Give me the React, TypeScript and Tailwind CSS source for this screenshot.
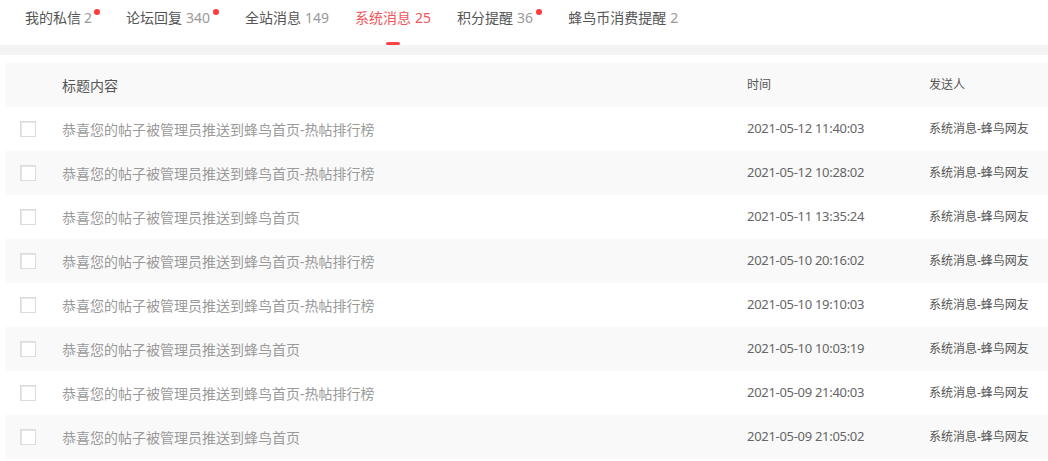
const tabs = [
  { label: '我的私信', count: 2, dot: true },
  { label: '论坛回复', count: 340, dot: true },
  { label: '全站消息', count: 149, dot: false },
  { label: '系统消息', count: 25, dot: false, active: true },
  { label: '积分提醒', count: 36, dot: true },
  { label: '蜂鸟币消费提醒', count: 2, dot: false },
];

const HOT = '恭喜您的帖子被管理员推送到蜂鸟首页-热帖排行榜';
const HOME = '恭喜您的帖子被管理员推送到蜂鸟首页';

const messages = [
  { title: HOT, time: '2021-05-12 11:40:03' },
  { title: HOT, time: '2021-05-12 10:28:02' },
  { title: HOME, time: '2021-05-11 13:35:24' },
  { title: HOT, time: '2021-05-10 20:16:02' },
  { title: HOT, time: '2021-05-10 19:10:03' },
  { title: HOME, time: '2021-05-10 10:03:19' },
  { title: HOT, time: '2021-05-09 21:40:03' },
  { title: HOME, time: '2021-05-09 21:05:02' },
];

export default function App() {
  return (
    <div
      className="w-[1048px] h-[461px] bg-white overflow-hidden"
      style={{ fontFamily: '"Noto Sans", "Noto Sans CJK SC", sans-serif' }}
    >
      {/* Tabs */}
      <div className="flex h-[45px] pl-[25px] gap-[26px]">
        {tabs.map((tab, i) => (
          <div key={tab.label} className="relative flex items-start pt-[7px] h-full">
            <span className={`text-[14px] leading-[22px] ${tab.active ? 'text-[#f2555b]' : 'text-[#555]'}`}>
              {tab.label}
              <span
                className={`${i === 0 ? 'ml-[3px]' : 'ml-[4px]'} ${tab.active ? 'text-[#f2555b]' : 'text-[#999]'}`}
              >
                {tab.count}
              </span>
            </span>
            {tab.dot && (
              <span
                className={`${i === 0 ? 'ml-[2px]' : 'ml-[3px]'} mt-[2px] w-[6px] h-[6px] rounded-full bg-[#ff3b3b]`}
              />
            )}
            {tab.active && (
              <span className="absolute bottom-0 left-1/2 -translate-x-1/2 w-[14px] h-[3px] rounded-full bg-[#ff4448]" />
            )}
          </div>
        ))}
      </div>

      <div className="h-[10px] bg-[#f4f4f4]" />

      {/* Table */}
      <div className="mt-[8px] ml-[5px]">
        <div className="grid grid-cols-[57px_685px_182px_1fr] h-[44px] items-center bg-[#f9f9f9] text-[#555]">
          <div />
          <div className="text-[14px]">标题内容</div>
          <div className="text-[12px]">时间</div>
          <div className="text-[12px]">发送人</div>
        </div>
        {messages.map((m, i) => (
          <div
            key={i}
            className={`grid grid-cols-[57px_685px_182px_1fr] h-[44px] items-center ${i % 2 === 1 ? 'bg-[#f9f9f9]' : 'bg-white'}`}
          >
            <div className="pl-[15px]">
              <div className="w-[16px] h-[16px] border border-[#dcdcdc] bg-white shadow-[inset_1px_1px_0_#e6e6e6]" />
            </div>
            <div className="text-[14px] text-[#9a9a9a]">{m.title}</div>
            <div className="text-[13px] tracking-[-0.3px] text-[#666]">{m.time}</div>
            <div className="text-[12px] text-[#555]">系统消息-蜂鸟网友</div>
          </div>
        ))}
      </div>
    </div>
  );
}
